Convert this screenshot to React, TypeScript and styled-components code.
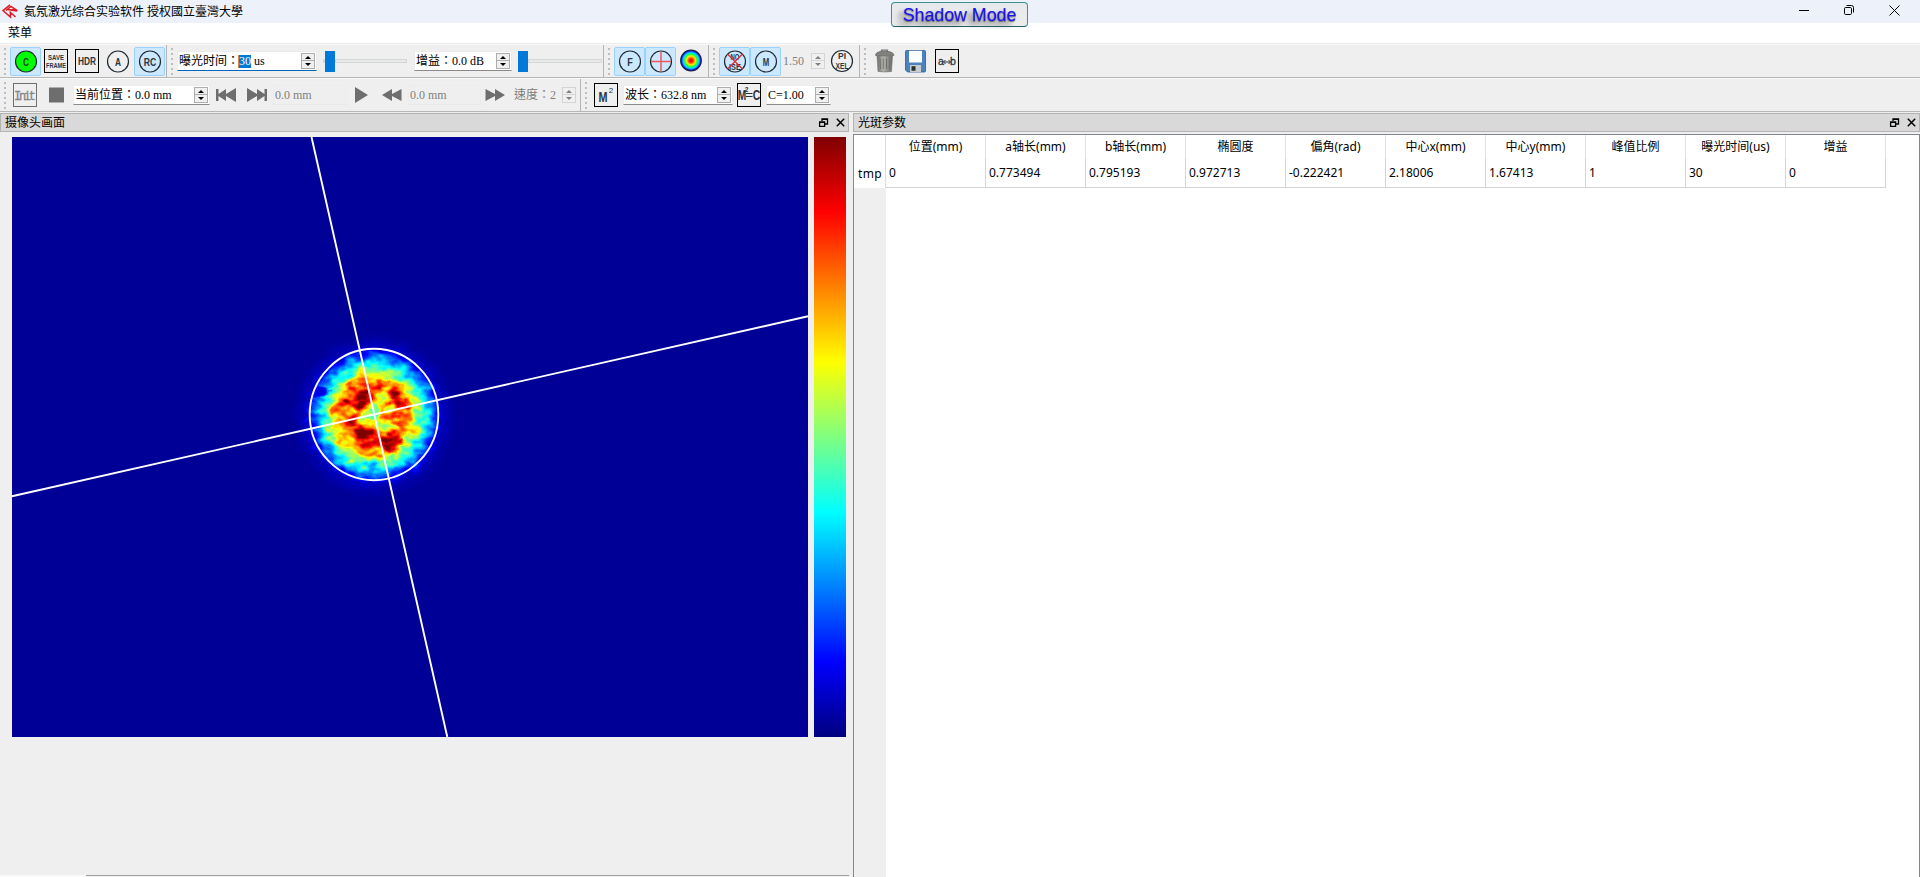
import React from 'react';
import styled, { createGlobalStyle } from 'styled-components';

const CJK = '"Noto Sans CJK TC", "Noto Sans CJK SC", sans-serif';

const GlobalStyle = createGlobalStyle`
  * { box-sizing: border-box; }
  body { margin: 0; overflow: hidden; background: #efefef; color: #000; font-family: "Liberation Serif", ${CJK}; font-size: 12px; }
  svg { display: block; flex: none; overflow: visible; }
`;

const Window = styled.div`
  width: 1920px;
  height: 877px;
  display: flex;
  flex-direction: column;
  background: #efefef;
  white-space: nowrap;
`;

const TitleBar = styled.header`
  position: relative;
  height: 23px;
  flex: none;
  display: flex;
  align-items: center;
  background: #edf2fa;
  padding-left: 2px;
`;

const Title = styled.h1`
  margin: 0 auto 0 5px;
  font: 12px/22px "Liberation Serif", ${CJK};
`;

const WindowButtons = styled.div`
  display: flex;
  align-items: center;
  gap: 35px;
  padding: 0 20px 3px 0;
`;

const ModeBadge = styled.div`
  position: absolute;
  left: 891px;
  top: 2px;
  z-index: 2;
  width: 137px;
  height: 25px;
  border: 1px solid #3d9095;
  border-bottom-color: #22666a;
  border-radius: 4px;
  background: linear-gradient(#e6e9ec, #ececec);
  color: #1a12ee;
  font: 17.8px/24px "Liberation Sans", Arial, sans-serif;
  text-align: center;
  text-shadow: 0 1px 1px rgba(0, 0, 0, 0.45), -4px 4px 5px rgba(0, 0, 0, 0.4), -7px 5px 6px rgba(0, 0, 0, 0.2);
`;

const MenuBar = styled.nav`
  height: 21px;
  flex: none;
  padding-left: 8px;
  border-bottom: 1px solid #ececec;
  background: #fff;
  line-height: 21px;
`;

const ToolRow = styled.div<{ $h: number }>`
  height: ${(p) => p.$h}px;
  flex: none;
  display: flex;
  align-items: center;
  border-top: 1px solid #fafafa;
  border-bottom: 1px solid #b6b6b6;
`;

const Group = styled.div<{ $w: number }>`
  width: ${(p) => p.$w}px;
  height: 100%;
  padding-left: 4px;
  display: flex;
  align-items: center;
  border-right: 1px solid #b4b4b4;
  &:last-child { border-right: 0; }
`;

const Grip = styled.i`
  width: 2px;
  height: 27px;
  flex: none;
  background: repeating-linear-gradient(#bdbdbd 0 2px, transparent 2px 5px);
`;

const ToolButton = styled.button<{ $on?: boolean; $ml?: number; $w?: number }>`
  width: ${(p) => p.$w ?? 31}px;
  height: 29px;
  margin: 0 0 0 ${(p) => p.$ml ?? 0}px;
  padding: 0;
  flex: none;
  display: flex;
  align-items: center;
  justify-content: center;
  border: 1px solid ${(p) => (p.$on ? '#99d1ff' : 'transparent')};
  border-radius: 2px;
  background: ${(p) => (p.$on ? '#cce8ff' : 'transparent')};
`;

const Field = styled.div<{ $w: number; $ml: number; $off?: boolean; $focus?: boolean; $bare?: boolean }>`
  width: ${(p) => p.$w}px;
  height: 20px;
  margin-left: ${(p) => p.$ml}px;
  padding: 0 1px;
  flex: none;
  display: flex;
  align-items: center;
  justify-content: space-between;
  line-height: 18px;
  color: ${(p) => (p.$off ? '#808080' : '#000')};
  background: ${(p) => (p.$off ? 'transparent' : '#fff')};
  border: 1px solid ${(p) => (p.$bare ? 'transparent' : '#ececec')};
  border-bottom-color: ${(p) => (p.$off ? (p.$bare ? 'transparent' : '#e8e8e8') : p.$focus ? '#0067c0' : '#8a8a8a')};
`;

const Selected = styled.span`
  background: #0078d7;
  color: #fff;
  display: inline-block;
  line-height: 13px;
  box-shadow: -1px 0 #e08030;
`;

const Steps = styled.span`
  width: 14px;
  height: 16px;
  display: grid;
  grid-template-rows: 8px 8px;
`;

const Step = styled.i<{ $off?: boolean }>`
  display: flex;
  align-items: center;
  justify-content: center;
  border: 1px solid ${(p) => (p.$off ? '#d4d4d4' : '#adadad')};
  color: ${(p) => (p.$off ? '#808080' : '#000')};
  background: #f0f0f0;
  & + & { border-top-width: 0; }
`;

const Slider = styled.div<{ $w: number; $ml: number }>`
  width: ${(p) => p.$w}px;
  height: 21px;
  margin-left: ${(p) => p.$ml}px;
  flex: none;
  display: flex;
  align-items: center;
`;

const Thumb = styled.i`
  width: 10px;
  height: 21px;
  background: #0078d7;
`;

const Groove = styled.i<{ $lead?: boolean }>`
  height: 4px;
  flex: ${(p) => (p.$lead ? '0 0 2px' : '1')};
  border: 1px solid #d6d6d6;
  background: #e7eaea;
`;

const Docks = styled.main`
  flex: 1;
  min-height: 0;
  display: flex;
  gap: 4px;
  padding-top: 1px;
`;

const Dock = styled.section<{ $w: number }>`
  width: ${(p) => p.$w}px;
  flex: none;
  display: flex;
  flex-direction: column;
`;

const DockTitle = styled.h2`
  height: 19px;
  margin: 0;
  padding: 0 3px 0 4px;
  flex: none;
  display: flex;
  align-items: center;
  border: 1px solid #b3b3b3;
  background: #d9d9d9;
  font: 12px/17px "Liberation Serif", ${CJK};
  & > span { flex: 1; padding-top: 1px; }
`;

const DockIcons = styled.span`
  && { flex: none; padding: 0; }
  display: flex;
  gap: 8px;
`;

const CameraView = styled.div`
  flex: 1;
  display: flex;
  align-items: flex-start;
  gap: 6px;
  padding: 5px 0 0 12px;
`;

const ColorBar = styled.div`
  width: 32px;
  height: 600px;
  background: linear-gradient(#800000, #f00 12.5%, #ff8000 25%, #ff0 37.5%, #80ff80 50%, #0ff 62.5%, #0080ff 75%, #00f 87.5%, #000080);
`;

const TabStrip = styled.div`
  height: 2px;
  display: flex;
  & > i:first-child { width: 86px; background: #fafafa; }
  & > i:last-child { flex: 1; height: 1px; background: #a0a0a0; }
`;

const TableFrame = styled.div`
  flex: 1;
  margin-top: 2px;
  display: flex;
  background: #fff;
  border: 1px solid #828790;
  border-bottom: 0;
`;

const RowHeads = styled.div`
  width: 32px;
  background: #efefef;
  font: 12px "Noto Sans", ${CJK};
`;

const RowHead = styled.div`
  height: 53px;
  padding: 29px 0 0 4px;
  border-right: 1px solid #dcdcdc;
  background: #fff;
  line-height: 20px;
  letter-spacing: 0.3px;
`;

const Grid = styled.table`
  align-self: flex-start;
  table-layout: fixed;
  width: 1000px;
  border-collapse: separate;
  border-spacing: 0;
  font: 12px "Noto Sans", ${CJK};
`;

const Head = styled.th`
  height: 23px;
  padding: 0;
  border-right: 1px solid #e2e2e2;
  font-weight: 400;
  line-height: 23px;
`;

const Cell = styled.td`
  height: 30px;
  padding: 0 0 0 3px;
  vertical-align: top;
  line-height: 29px;
  border-right: 1px solid #d4d4d4;
  border-bottom: 1px solid #d4d4d4;
`;

const glyph = { fontFamily: 'Liberation Sans, Arial, sans-serif', fill: '#2b363e', textAnchor: 'middle' as const, fontWeight: 700 };

function Spinner({ off }: { off?: boolean }) {
  return (
    <Steps>
      <Step $off={off}><svg width="6" height="3"><path d="M0 3 3 0 6 3Z" fill="currentColor" /></svg></Step>
      <Step $off={off}><svg width="6" height="3"><path d="M0 0 3 3 6 0Z" fill="currentColor" /></svg></Step>
    </Steps>
  );
}

function Ring({ fill = 'none', cy = 12.5 }: { fill?: string; cy?: number }) {
  return <circle cx="12" cy={cy} r="10.5" fill={fill} stroke="#1f2b33" strokeWidth="1.2" />;
}

function RoundIcon({ text, fill, size = 11, len }: { text: string; fill?: string; size?: number; len: number }) {
  return (
    <svg width="24" height="24" viewBox="0 0 24 24">
      <Ring fill={fill} />
      <text x="12" y="16.5" fontSize={size} textLength={len} lengthAdjust="spacingAndGlyphs" {...glyph}>{text}</text>
    </svg>
  );
}

function SquareIcon({ children, color = '#000' }: { children: React.ReactNode; color?: string }) {
  return (
    <svg width="24" height="24" viewBox="0 0 24 24">
      <rect x=".5" y=".5" width="23" height="23" fill="none" stroke={color} />
      {children}
    </svg>
  );
}

function StackedText({ top, bottom, size, w1, w2, y1, y2 }: { top: string; bottom: string; size: number; w1: number; w2: number; y1: number; y2: number }) {
  return (
    <g fontSize={size} {...glyph}>
      <text x="12" y={y1} textLength={w1} lengthAdjust="spacingAndGlyphs">{top}</text>
      <text x="12" y={y2} textLength={w2} lengthAdjust="spacingAndGlyphs">{bottom}</text>
    </g>
  );
}

function Media({ d, w = 20 }: { d: string; w?: number }) {
  return <svg width={w} height="16" viewBox={`0 0 ${w} 16`}><path d={d} fill="#6e6e6e" /></svg>;
}

function DockControls() {
  return (
    <DockIcons>
      <svg width="9" height="9" viewBox="0 0 9 9" fill="none" stroke="#000">
        <path d="M3 3V1h5.500v5H6M3 1.300h5.500" strokeWidth="1.300" />
        <path d="M.6 4h5v4.400h-5ZM.6 4.400h5" strokeWidth="1.300" />
      </svg>
      <svg width="9" height="9" viewBox="0 0 9 9"><path d="M.8.8 8.200 8.200M8.200.8.8 8.200" stroke="#000" strokeWidth="1.500" /></svg>
    </DockIcons>
  );
}

/* Intensity spots: x, y, rx, ry, tone, opacity */
const spots: [number, number, number, number, string, number][] = [
  [344, 266, 10, 6, '#fff', 0.9], [354, 258, 6, 8, '#fff', 0.75], [342, 252, 6, 6, '#eee', 0.5],
  [349, 293, 8, 5, '#fff', 0.75], [354, 303, 11, 6, '#fff', 0.9], [343, 284, 7, 4, '#fff', 0.5],
  [377, 305, 12, 6, '#fff', 0.85], [378, 314, 6, 5, '#fff', 0.65], [383, 258, 6, 5, '#fff', 0.6],
  [388, 270, 9, 7, '#fff', 0.55], [366, 247, 12, 4, '#eee', 0.5], [325, 272, 8, 6, '#ddd', 0.5],
  [391, 283, 7, 4, '#ccc', 0.5], [362, 277, 7, 7, '#555', 0.6], [372, 264, 9, 9, '#888', 0.6],
  [349, 281, 5, 4, '#666', 0.55], [374, 288, 12, 6, '#888', 0.6], [384, 236, 5, 10, '#777', 0.5],
  [312, 254, 9, 4, '#000', 0.75],
];

function BeamImage() {
  return (
    <svg width="796" height="600" viewBox="0 0 796 600">
      <defs>
        <radialGradient id="beam" gradientUnits="userSpaceOnUse" cx="362" cy="279" r="86">
          <stop offset="0" stopColor="#a0a0a0" />
          <stop offset=".16" stopColor="#b2b2b2" />
          <stop offset=".3" stopColor="#c8c8c8" />
          <stop offset=".42" stopColor="#b4b4b4" />
          <stop offset=".5" stopColor="#949494" />
          <stop offset=".6" stopColor="#626262" />
          <stop offset=".7" stopColor="#363636" />
          <stop offset=".79" stopColor="#131313" />
          <stop offset="1" stopColor="#060606" />
        </radialGradient>
        <filter id="soft" x="-50%" y="-50%" width="200%" height="200%"><feGaussianBlur stdDeviation="2" /></filter>
        <filter id="jet" filterUnits="userSpaceOnUse" x="262" y="178" width="200" height="200" colorInterpolationFilters="sRGB">
          <feTurbulence type="fractalNoise" baseFrequency=".09 .13" numOctaves="2" seed="7" result="n" />
          <feColorMatrix in="n" type="matrix" values="1.400 0 0 0 -.2  1.400 0 0 0 -.2  1.400 0 0 0 -.2  0 0 0 0 1" result="g" />
          <feColorMatrix in="n" type="matrix" values="1 0 0 0 0  0 1 0 0 0  0 0 1 0 0  0 0 0 0 1" result="d" />
          <feDisplacementMap in="SourceGraphic" in2="d" scale="14" xChannelSelector="B" yChannelSelector="G" result="s" />
          <feComposite in="s" in2="g" operator="arithmetic" k1=".5" k2=".75" result="m" />
          <feComponentTransfer in="m">
            <feFuncR type="table" tableValues="0 0 0 0 .5 1 1 1 .5" />
            <feFuncG type="table" tableValues="0 0 .5 1 1 1 .5 0 0" />
            <feFuncB type="table" tableValues=".5 1 1 1 .5 0 0 0 0" />
          </feComponentTransfer>
        </filter>
        <radialGradient id="edge" gradientUnits="userSpaceOnUse" cx="362" cy="278" r="90">
          <stop offset=".72" stopColor="#fff" />
          <stop offset=".98" stopColor="#000" />
        </radialGradient>
        <mask id="fade"><rect width="796" height="600" fill="url(#edge)" /></mask>
      </defs>
      <rect width="796" height="600" fill="#000096" />
      <g mask="url(#fade)">
        <g filter="url(#jet)">
          <rect x="252" y="168" width="220" height="220" fill="url(#beam)" />
          <g filter="url(#soft)">
            {spots.map(([cx, cy, rx, ry, c, o], i) => (
              <ellipse key={i} cx={cx} cy={cy} rx={rx} ry={ry} fill={c} opacity={o} />
            ))}
          </g>
        </g>
      </g>
      <g fill="none" stroke="#fff" strokeWidth="1.900">
        <ellipse cx="362" cy="277.500" rx="64.300" ry="65.700" />
        <path d="M0 359.300 796 179.300M299.500 0 435.300 600" />
      </g>
    </svg>
  );
}

const columns: [string, string][] = [
  ['位置(mm)', '0'], ['a轴长(mm)', '0.773494'], ['b轴长(mm)', '0.795193'], ['椭圆度', '0.972713'], ['偏角(rad)', '-0.222421'],
  ['中心x(mm)', '2.18006'], ['中心y(mm)', '1.67413'], ['峰值比例', '1'], ['曝光时间(us)', '30'], ['增益', '0'],
];

export default function App() {
  return (
    <Window>
      <GlobalStyle />
      <TitleBar>
        <svg width="17" height="15" viewBox="0 0 17 15" fill="none" stroke="#dc1f26" strokeWidth="1.500">
          <path d="M8 .8 1 6.600 8.500 13V8.800M4 6.500 9 2.500l5 3.200H5.500M7.500 7.500 13.500 13M8.500 6l6.500 1" />
        </svg>
        <Title>氦氖激光综合实验软件 授权國立臺灣大學</Title>
        <ModeBadge>Shadow Mode</ModeBadge>
        <WindowButtons>
          <svg width="10" height="10"><path d="M0 5.500h10" stroke="#000" /></svg>
          <svg width="10" height="10" viewBox="0 0 10 10" fill="none" stroke="#000"><rect x=".5" y="2.500" width="7" height="7" rx="1.200" /><path d="M2.500.5h5a2 2 0 0 1 2 2v5" /></svg>
          <svg width="11" height="11" viewBox="0 0 11 11"><path d="M.5.5l10 10M10.500.5l-10 10" stroke="#000" /></svg>
        </WindowButtons>
      </TitleBar>
      <MenuBar>菜单</MenuBar>

      <ToolRow $h={34}>
        <Group $w={167}>
          <Grip />
          <ToolButton $on $ml={4}><RoundIcon text="C" fill="#0f0" size={11.5} len={6} /></ToolButton>
          <ToolButton $ml={3} $w={24}><SquareIcon><StackedText top="SAVE" bottom="FRAME" size={7.5} w1={16} w2={20} y1={10.5} y2={19} /></SquareIcon></ToolButton>
          <ToolButton $ml={7} $w={24}><SquareIcon><text x="12" y="16" fontSize="11.500" textLength="18" lengthAdjust="spacingAndGlyphs" {...glyph}>HDR</text></SquareIcon></ToolButton>
          <ToolButton $ml={7} $w={24}><RoundIcon text="A" size={11} len={6} /></ToolButton>
          <ToolButton $on $ml={4}><RoundIcon text="RC" size={11.5} len={12.5} /></ToolButton>
        </Group>
        <Group $w={437}>
          <Grip />
          <Field $w={140} $ml={4} $focus><span>曝光时间：<Selected>30</Selected> us</span><Spinner /></Field>
          <Slider $w={84} $ml={6}><Groove $lead /><Thumb /><Groove /></Slider>
          <Field $w={98} $ml={7}><span>增益：0.0 dB</span><Spinner /></Field>
          <Slider $w={84} $ml={6}><Thumb /><Groove /></Slider>
        </Group>
        <Group $w={105}>
          <Grip />
          <ToolButton $on $ml={4}><RoundIcon text="F" size={10.5} len={5.5} /></ToolButton>
          <ToolButton $on>
            <svg width="24" height="24" viewBox="0 0 24 24"><Ring /><path d="M12 2.500v20M2 12.500h20" stroke="#f0575d" strokeWidth="1.500" /></svg>
          </ToolButton>
          <ToolButton $w={30}>
            <svg width="24" height="24" viewBox="0 0 24 24">
              <defs><radialGradient id="rainbow"><stop offset=".1" stopColor="#f00" /><stop offset=".28" stopColor="#f60" /><stop offset=".42" stopColor="#fe0" /><stop offset=".6" stopColor="#2f4" /><stop offset=".76" stopColor="#0df" /><stop offset=".95" stopColor="#20f" /></radialGradient></defs>
              <circle cx="12" cy="11.500" r="10.300" fill="url(#rainbow)" stroke="#172050" strokeWidth="1.200" />
            </svg>
          </ToolButton>
        </Group>
        <Group $w={151}>
          <Grip />
          <ToolButton $on $ml={4}>
            <svg width="24" height="24" viewBox="0 0 24 24">
              <Ring />
              <StackedText top="NO" bottom="ISE" size={8.5} w1={9} w2={12} y1={10.5} y2={20.5} />
              <path d="M4.500 5 19.500 20M19.500 5 4.500 20" stroke="#e02a30" strokeWidth="1.200" />
            </svg>
          </ToolButton>
          <ToolButton $on><RoundIcon text="M" size={11} len={6.5} /></ToolButton>
          <Field $w={46} $ml={0} $off $bare><span>1.50</span><Spinner off /></Field>
          <ToolButton $ml={3} $w={24}>
            <svg width="24" height="24" viewBox="0 0 24 24">
              <Ring cy={12} />
              <StackedText top="PI" bottom="XEL" size={8.5} w1={8} w2={13} y1={10} y2={19.500} />
            </svg>
          </ToolButton>
        </Group>
        <Group $w={200}>
          <Grip />
          <ToolButton $ml={9} $w={20}>
            <svg width="20" height="24" viewBox="0 0 20 24">
              <defs><linearGradient id="can"><stop stopColor="#6c6c68" /><stop offset=".4" stopColor="#b5b5b0" /><stop offset="1" stopColor="#696965" /></linearGradient></defs>
              <path d="M6.500 3V1.200h6V3" fill="none" stroke="#777" strokeWidth="1.300" />
              <path d="M.7 5.500Q1.500 2.300 9.500 2.300t9.300 3.200v1H.7Z" fill="#80807c" stroke="#5e5e5a" strokeWidth=".7" />
              <path d="M2 7h15.500l-1 15.500q-7 1-13.500 0Z" fill="url(#can)" stroke="#777772" strokeWidth=".6" />
              <path d="M5 9.500 5.500 20M8.300 9.500V20M11.500 9.500V20M14.800 9.500 14.300 20" stroke="#6d6d69" strokeWidth=".9" />
            </svg>
          </ToolButton>
          <ToolButton $ml={10} $w={22}>
            <svg width="22" height="24" viewBox="0 0 22 24">
              <path d="M1.500 1.500h18a1 1 0 0 1 1 1v19.500a1 1 0 0 1-1 1h-17l-2-2V2.500a1 1 0 0 1 1-1Z" fill="#4a82c2" stroke="#2a5b99" strokeWidth=".8" />
              <path d="M4 1.800h13v11.700H4Z" fill="#fff" />
              <path d="M5 16h11v7H5Z" fill="#c9cdcb" />
              <path d="M6.500 17.200h4v4.500h-4Z" fill="#26302c" />
            </svg>
          </ToolButton>
          <ToolButton $ml={8} $w={24}><SquareIcon><g fontSize="10.500" {...glyph} fontWeight={400} stroke="#2b363e" strokeWidth=".3"><text x="6" y="16">a</text><text x="18" y="16">b</text></g><path d="M8.500 13h7M10.500 11l-2 2 2 2M13.500 11l2 2-2 2" fill="none" stroke="#2b363e" /></SquareIcon></ToolButton>
        </Group>
      </ToolRow>

      <ToolRow $h={34}>
        <Group $w={581}>
          <Grip />
          <ToolButton $ml={7} $w={24}><SquareIcon color="#707070"><text x="12" y="16.500" fontSize="12" textLength="22" fill="#858585" stroke="#858585" strokeWidth=".3" textAnchor="middle" fontFamily="Liberation Mono, monospace">Init</text></SquareIcon></ToolButton>
          <ToolButton $ml={12} $w={15}><Media w={15} d="M0 .5h15v15H0Z" /></ToolButton>
          <Field $w={137} $ml={9}><span>当前位置：0.0 mm</span><Spinner /></Field>
          <ToolButton $ml={6} $w={20}><Media d="M0 2h2.500v5l7.500-5v5l10-6v14l-10-6v5L2.500 9v5H0Z" /></ToolButton>
          <ToolButton $ml={11} $w={20}><Media d="M20 2h-2.500v5L10 2v5L0 1v14l10-6v5l7.500-5v5H20Z" /></ToolButton>
          <Field $w={73} $ml={6} $off><span>0.0 mm</span></Field>
          <ToolButton $ml={9} $w={13}><Media w={13} d="M0 0 13 8 0 16Z" /></ToolButton>
          <ToolButton $ml={14} $w={20}><Media d="M0 8 10 2v5l9.500-5v12L10 9v5Z" /></ToolButton>
          <Field $w={73} $ml={6} $off><span>0.0 mm</span></Field>
          <ToolButton $ml={4} $w={20}><Media d="M20 8 10 2v5L.5 2v12L10 9v5Z" /></ToolButton>
          <Field $w={66} $ml={7} $off $bare><span>速度：2</span><Spinner off /></Field>
        </Group>
        <Group $w={400}>
          <Grip />
          <ToolButton $ml={7} $w={24}><SquareIcon><text x="9" y="18.500" fontSize="14.500" textLength="9" lengthAdjust="spacingAndGlyphs" {...glyph}>M</text><text x="17" y="10" fontSize="8" {...glyph} fontWeight={400}>2</text></SquareIcon></ToolButton>
          <Field $w={110} $ml={5}><span>波长：632.8 nm</span><Spinner /></Field>
          <ToolButton $ml={4} $w={24}><SquareIcon><text x="5" y="17" fontSize="14" textLength="8.500" lengthAdjust="spacingAndGlyphs" {...glyph}>M</text><text x="9.500" y="8.500" fontSize="6.500" {...glyph}>2</text><path d="M9 10.500h6.500M9 13.500h6.500" stroke="#26323a" /><text x="19.500" y="17" fontSize="14" textLength="7.500" lengthAdjust="spacingAndGlyphs" {...glyph}>C</text></SquareIcon></ToolButton>
          <Field $w={65} $ml={5}><span>C=1.00</span><Spinner /></Field>
        </Group>
      </ToolRow>

      <Docks>
        <Dock $w={849}>
          <DockTitle><span>摄像头画面</span><DockControls /></DockTitle>
          <CameraView>
            <BeamImage />
            <ColorBar />
          </CameraView>
          <TabStrip><i /><i /></TabStrip>
        </Dock>
        <Dock $w={1067}>
          <DockTitle><span>光斑参数</span><DockControls /></DockTitle>
          <TableFrame>
            <RowHeads><RowHead>tmp</RowHead></RowHeads>
            <Grid>
              <thead><tr>{columns.map(([h]) => <Head key={h}>{h}</Head>)}</tr></thead>
              <tbody><tr>{columns.map(([h, v]) => <Cell key={h}>{v}</Cell>)}</tr></tbody>
            </Grid>
          </TableFrame>
        </Dock>
      </Docks>
    </Window>
  );
}
